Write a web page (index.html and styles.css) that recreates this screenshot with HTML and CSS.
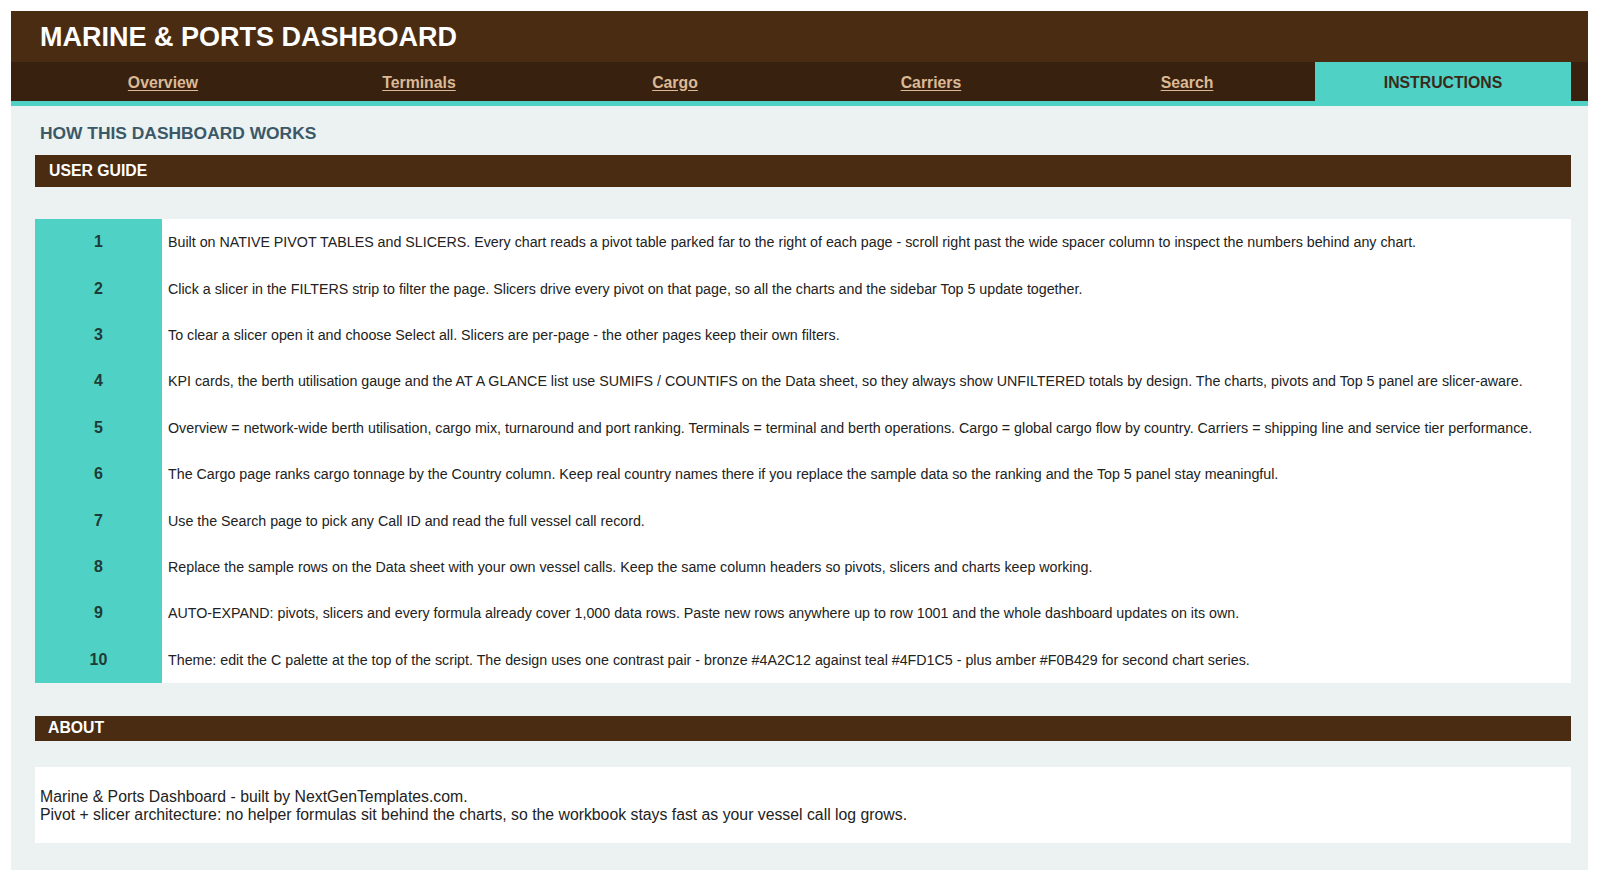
FILE: index.html
```html
<!DOCTYPE html>
<html lang="en">
<head>
<meta charset="utf-8">
<title>Marine &amp; Ports Dashboard</title>
<link rel="stylesheet" href="styles.css">
</head>
<body>
<div class="app">
  <header class="header">
    <h1 class="title">MARINE &amp; PORTS DASHBOARD</h1>
  </header>
  <nav class="nav">
    <a class="nav-item" href="#">Overview</a>
    <a class="nav-item" href="#">Terminals</a>
    <a class="nav-item" href="#">Cargo</a>
    <a class="nav-item" href="#">Carriers</a>
    <a class="nav-item" href="#">Search</a>
    <span class="nav-item nav-active">INSTRUCTIONS</span>
  </nav>
  <main class="content">
    <h2 class="page-heading">HOW THIS DASHBOARD WORKS</h2>
    <div class="section-bar section-bar-guide">USER GUIDE</div>
    <div class="guide">
      <div class="guide-row"><div class="num">1</div><div class="text">Built on NATIVE PIVOT TABLES and SLICERS. Every chart reads a pivot table parked far to the right of each page - scroll right past the wide spacer column to inspect the numbers behind any chart.</div></div>
      <div class="guide-row"><div class="num">2</div><div class="text">Click a slicer in the FILTERS strip to filter the page. Slicers drive every pivot on that page, so all the charts and the sidebar Top 5 update together.</div></div>
      <div class="guide-row"><div class="num">3</div><div class="text">To clear a slicer open it and choose Select all. Slicers are per-page - the other pages keep their own filters.</div></div>
      <div class="guide-row"><div class="num">4</div><div class="text">KPI cards, the berth utilisation gauge and the AT A GLANCE list use SUMIFS / COUNTIFS on the Data sheet, so they always show UNFILTERED totals by design. The charts, pivots and Top 5 panel are slicer-aware.</div></div>
      <div class="guide-row"><div class="num">5</div><div class="text">Overview = network-wide berth utilisation, cargo mix, turnaround and port ranking. Terminals = terminal and berth operations. Cargo = global cargo flow by country. Carriers = shipping line and service tier performance.</div></div>
      <div class="guide-row"><div class="num">6</div><div class="text">The Cargo page ranks cargo tonnage by the Country column. Keep real country names there if you replace the sample data so the ranking and the Top 5 panel stay meaningful.</div></div>
      <div class="guide-row"><div class="num">7</div><div class="text">Use the Search page to pick any Call ID and read the full vessel call record.</div></div>
      <div class="guide-row"><div class="num">8</div><div class="text">Replace the sample rows on the Data sheet with your own vessel calls. Keep the same column headers so pivots, slicers and charts keep working.</div></div>
      <div class="guide-row"><div class="num">9</div><div class="text">AUTO-EXPAND: pivots, slicers and every formula already cover 1,000 data rows. Paste new rows anywhere up to row 1001 and the whole dashboard updates on its own.</div></div>
      <div class="guide-row"><div class="num">10</div><div class="text">Theme: edit the C palette at the top of the script. The design uses one contrast pair - bronze #4A2C12 against teal #4FD1C5 - plus amber #F0B429 for second chart series.</div></div>
    </div>
    <div class="section-bar section-bar-about">ABOUT</div>
    <div class="about">
      <p class="about-line">Marine &amp; Ports Dashboard - built by NextGenTemplates.com.</p>
      <p class="about-line">Pivot + slicer architecture: no helper formulas sit behind the charts, so the workbook stays fast as your vessel call log grows.</p>
    </div>
  </main>
</div>
</body>
</html>
```

FILE: styles.css
```css
* { box-sizing: border-box; }

html, body {
  margin: 0;
  padding: 0;
  background: #ffffff;
}

body {
  font-family: "Liberation Sans", Arial, sans-serif;
  color: #222222;
}

.app {
  margin: 11px 12px 0 11px;
}

.header {
  height: 51px;
  background: #4a2c12;
  display: flex;
  align-items: center;
  padding-left: 29px;
  padding-top: 2px;
}

.title {
  margin: 0;
  font-size: 27px;
  font-weight: bold;
  color: #ffffff;
}

.nav {
  height: 44px;
  background: #38210e;
  border-bottom: 5px solid #4fd1c5;
  display: grid;
  grid-template-columns: repeat(6, 1fr);
  padding: 0 17px 0 24px;
}

.nav-item {
  display: flex;
  align-items: center;
  justify-content: center;
  padding-top: 2px;
  font-size: 15.8px;
  font-weight: bold;
  color: #dcb996;
  text-decoration: underline;
  text-underline-offset: 2px;
}

.nav-active {
  background: #4fd1c5;
  color: #3a2a1a;
  text-decoration: none;
}

.content {
  background: #ecf1f1;
  padding: 17px 17px 27px 24px;
}

.page-heading {
  margin: 0 0 11px 0;
  padding-left: 5px;
  font-size: 17.4px;
  line-height: 21px;
  font-weight: bold;
  color: #3b5868;
}

.section-bar {
  background: #4a2c12;
  color: #ffffff;
  font-size: 15.8px;
  font-weight: bold;
  display: flex;
  align-items: center;
}

.section-bar-guide {
  height: 32px;
  padding-left: 14px;
  padding-bottom: 1px;
}

.section-bar-about {
  height: 25px;
  padding-left: 13px;
  margin-top: 33px;
}

.guide {
  margin-top: 32px;
  background: #ffffff;
}

.guide-row {
  display: flex;
  height: 46.4px;
}

.num {
  width: 127px;
  flex: none;
  background: #4fd1c5;
  display: flex;
  align-items: center;
  justify-content: center;
  font-size: 16px;
  font-weight: bold;
  color: #1f3b35;
}

.text {
  display: flex;
  align-items: center;
  padding-left: 6px;
  font-size: 14.25px;
  color: #222222;
}

.about {
  margin-top: 26px;
  height: 76px;
  background: #ffffff;
  display: flex;
  flex-direction: column;
  justify-content: center;
  padding-left: 5px;
  padding-top: 3px;
}

.about-line {
  margin: 0;
  font-size: 15.8px;
  line-height: 18px;
  color: #222222;
}
```
